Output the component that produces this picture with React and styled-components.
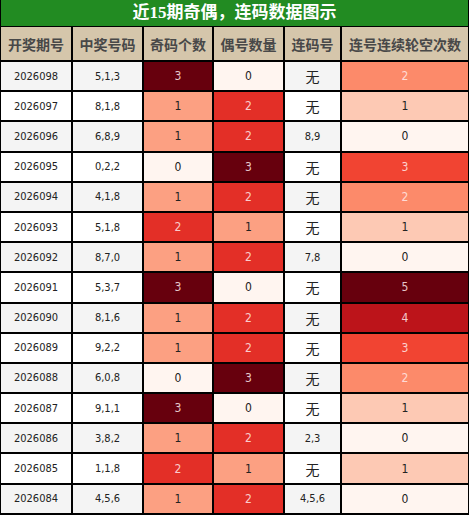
import React from 'react'
import styled, { createGlobalStyle } from 'styled-components';

const GlobalStyle = createGlobalStyle`
  body {
    margin: 0;
    background: #ffffff;
  }
`;

const rows = [
  ['2026098', '5,1,3', 3, 0, '无', 2],
  ['2026097', '8,1,8', 1, 2, '无', 1],
  ['2026096', '6,8,9', 1, 2, '8,9', 0],
  ['2026095', '0,2,2', 0, 3, '无', 3],
  ['2026094', '4,1,8', 1, 2, '无', 2],
  ['2026093', '5,1,8', 2, 1, '无', 1],
  ['2026092', '8,7,0', 1, 2, '7,8', 0],
  ['2026091', '5,3,7', 3, 0, '无', 5],
  ['2026090', '8,1,6', 1, 2, '无', 4],
  ['2026089', '9,2,2', 1, 2, '无', 3],
  ['2026088', '6,0,8', 0, 3, '无', 2],
  ['2026087', '9,1,1', 3, 0, '无', 1],
  ['2026086', '3,8,2', 1, 2, '2,3', 0],
  ['2026085', '1,1,8', 2, 1, '无', 1],
  ['2026084', '4,5,6', 1, 2, '4,5,6', 0],
];

// reds scale, 0..3 for odd/even counts
const countColors = ['#fff5f0', '#fca082', '#e32f27', '#67000d'];
// reds scale, 0..5 for gap counts
const gapColors = ['#fff5f0', '#fdc9b4', '#fc8a6a', '#f14432', '#bc141a', '#67000d'];

const headers = ['开奖期号', '中奖号码', '奇码个数', '偶号数量', '连码号', '连号连续轮空次数'];

const App = () => {
  return (
    <>
      <GlobalStyle />
      <Wrapper>
        <Title>近15期奇偶，连码数据图示</Title>
        <Table>
          <colgroup>
            <col style={{ width: 71 }} />
            <col style={{ width: 71 }} />
            <col style={{ width: 70 }} />
            <col style={{ width: 71 }} />
            <col style={{ width: 57 }} />
            <col />
          </colgroup>
          <thead>
            <tr>
              {headers.map((h) => (
                <HeadCell key={h}>{h}</HeadCell>
              ))}
            </tr>
          </thead>
          <tbody>
            {rows.map((r, i) => (
              <tr key={r[0]}>
                <Cell $striped={i % 2 === 0}>{r[0]}</Cell>
                <Cell $striped={i % 2 === 0}>{r[1]}</Cell>
                <HeatCell $bg={countColors[r[2]]} $light={r[2] >= 2}>{r[2]}</HeatCell>
                <HeatCell $bg={countColors[r[3]]} $light={r[3] >= 2}>{r[3]}</HeatCell>
                <Cell $striped={i % 2 === 0} $cjk={r[4] === '无'}>{r[4]}</Cell>
                <HeatCell $bg={gapColors[r[5]]} $light={r[5] >= 2}>{r[5]}</HeatCell>
              </tr>
            ))}
          </tbody>
        </Table>
      </Wrapper>
    </>
  );
};

export default App


const Wrapper = styled.div`
  width: 469px;
  box-sizing: border-box;
  border-left: 1px solid #000;
  border-right: 1px solid #000;
`;

const Title = styled.div`
  height: 27px;
  background: #228b22;
  color: #ffffff;
  font-family: "Liberation Serif", "Noto Sans CJK SC", serif;
  font-weight: 700;
  font-size: 17px;
  line-height: 26px;
  text-align: center;
  border-bottom: 1px solid #000;
  box-sizing: border-box;
`;

const Table = styled.table`
  width: 467px;
  table-layout: fixed;
  border-collapse: collapse;
`;

const HeadCell = styled.th`
  height: 33px;
  padding: 0;
  background: #d5c6ab;
  color: #484848;
  border: 2px solid #000;
  border-top: none;
  font-family: "Noto Sans CJK SC", sans-serif;
  font-size: 14px;
  font-weight: 700;
  text-align: center;
  &:first-child {
    border-left: none;
  }
  &:last-child {
    border-right: none;
  }
`;

const Cell = styled.td`
  height: 28.2px;
  padding: 0;
  background: ${(p) => (p.$striped ? '#f4f4f4' : '#ffffff')};
  color: #222;
  border: 2px solid #000;
  font-family: ${(p) => (p.$cjk ? '"Noto Sans CJK SC", sans-serif' : '"DejaVu Sans", sans-serif')};
  font-stretch: condensed;
  font-size: ${(p) => (p.$cjk ? '14px' : '11px')};
  text-align: center;
  &:first-child {
    border-left: none;
  }
`;

const HeatCell = styled.td`
  height: 28.2px;
  padding: 0;
  background: ${(p) => p.$bg};
  color: ${(p) => (p.$light ? 'rgba(255, 235, 235, 0.85)' : '#222')};
  border: 2px solid #000;
  font-family: "DejaVu Sans", sans-serif;
  font-stretch: condensed;
  font-size: 12px;
  text-align: center;
  &:last-child {
    border-right: none;
  }
`;
